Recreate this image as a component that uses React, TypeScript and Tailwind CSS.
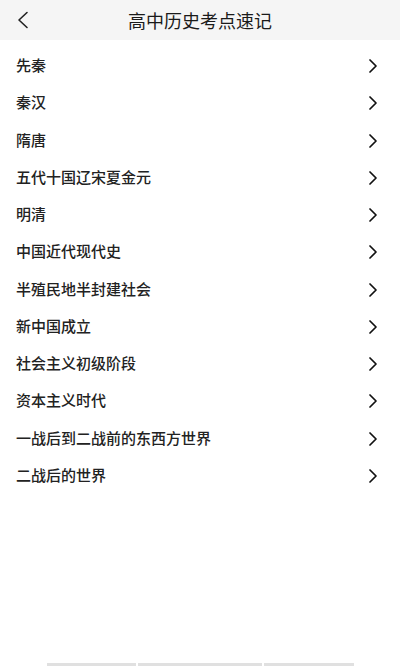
const periods = [
  "先秦",
  "秦汉",
  "隋唐",
  "五代十国辽宋夏金元",
  "明清",
  "中国近代现代史",
  "半殖民地半封建社会",
  "新中国成立",
  "社会主义初级阶段",
  "资本主义时代",
  "一战后到二战前的东西方世界",
  "二战后的世界",
];

const font = { fontFamily: '"Noto Sans CJK SC", "Noto Sans", sans-serif' };

function ChevronLeft() {
  return (
    <svg width="14" height="18" viewBox="0 0 14 18" fill="none">
      <path d="M11 1.5L3 9l8 7.5" stroke="#222" strokeWidth="1.6" strokeLinecap="round" strokeLinejoin="round" />
    </svg>
  );
}

function ChevronRight() {
  return (
    <svg width="10" height="14" viewBox="0 0 10 14" fill="none" className="mt-[3px]">
      <path d="M2 1l6 6-6 6" stroke="#111" strokeWidth="1.7" strokeLinecap="round" strokeLinejoin="round" />
    </svg>
  );
}

export default function App() {
  return (
    <div className="flex min-h-[666px] w-[400px] flex-col bg-white text-[#222]" style={font}>
      <header className="relative flex h-[40px] items-center justify-center bg-[#f5f5f5]">
        <button className="absolute left-[16px] top-[11px] flex items-center">
          <ChevronLeft />
        </button>
        <h1 className="text-[18px] leading-none text-[#1a1a1a]">高中历史考点速记</h1>
      </header>

      <ul className="pt-[6px]">
        {periods.map((p) => (
          <li key={p} className="flex h-[37.25px] items-center justify-between pl-[16px] pr-[22px]">
            <span className="text-[15px] font-medium leading-none text-[#222]">{p}</span>
            <ChevronRight />
          </li>
        ))}
      </ul>

      <div className="flex-1" />

      <div className="flex h-[3px] justify-center gap-[2px]">
        <div className="w-[89px] bg-[#e0e0e0]" />
        <div className="w-[124px] bg-[#e0e0e0]" />
        <div className="w-[90px] bg-[#e0e0e0]" />
      </div>
    </div>
  );
}
